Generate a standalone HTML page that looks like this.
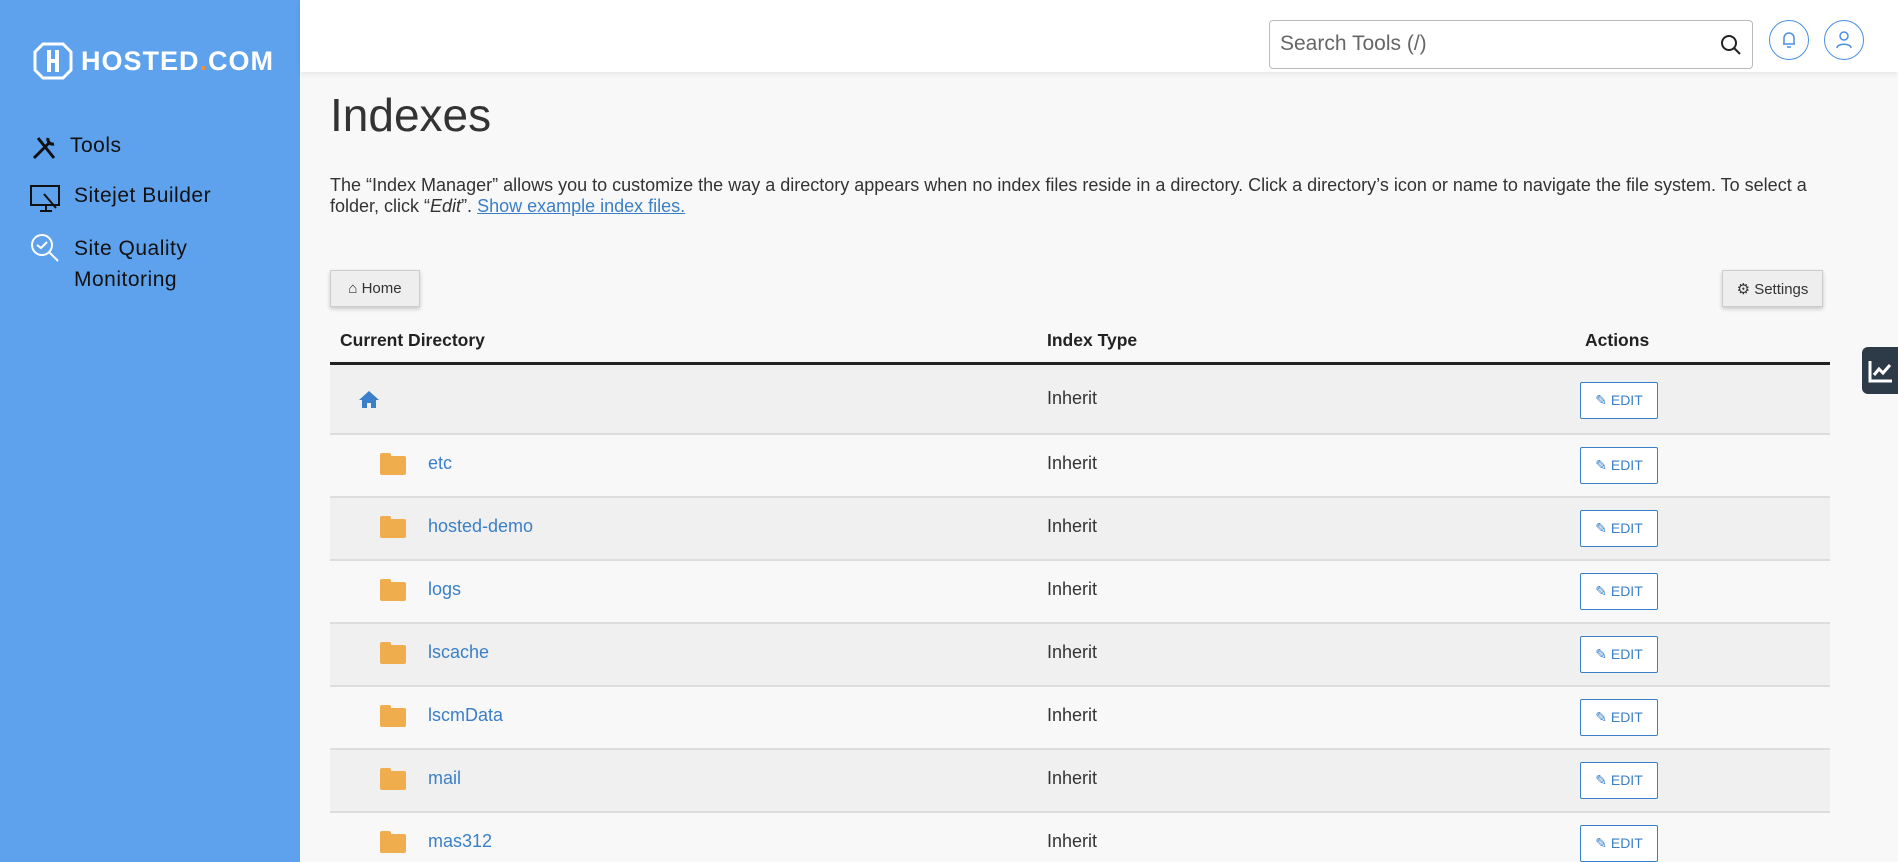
<!DOCTYPE html>
<html style="overflow:hidden;width:1898px;height:862px"><head><meta charset="utf-8"><style>
*{box-sizing:border-box;margin:0;padding:0}
body{width:1898px;height:862px;overflow:hidden;background:#f8f8f8;font-family:"Liberation Sans",sans-serif;color:#333;position:relative}
.side{position:absolute;left:0;top:0;width:300px;height:862px;background:#5ea2ee}
.logo{position:absolute;left:33px;top:42px;color:#fff;font-weight:bold;font-size:27px;letter-spacing:1px;display:flex;align-items:center}
.nav{position:absolute;left:30px;color:#111;font-size:21px;display:flex;align-items:flex-start;letter-spacing:.5px}
.nav svg{margin-right:12px}
.top{position:absolute;left:300px;top:0;right:0;height:72px;background:#fff;box-shadow:0 2px 6px rgba(0,0,0,.08)}
.search{position:absolute;left:1269px;top:20px;width:484px;height:49px;border:1px solid #bbb;border-radius:4px;background:#fff;font-size:21px;color:#666;padding:11px 10px}
.circ{position:absolute;top:20px;width:40px;height:40px;border:1px solid #4a90e2;border-radius:50%;display:flex;align-items:center;justify-content:center}
h1{position:absolute;left:330px;top:88px;font-size:46px;font-weight:normal;color:#333}
.p{position:absolute;left:330px;top:175px;width:1540px;font-size:18px;line-height:21px;color:#333;white-space:nowrap}
.p a{color:#3a7fc7;text-decoration:underline}
.btn{position:absolute;height:37px;background:#eee;border:1px solid #ccc;box-shadow:0 2px 4px rgba(0,0,0,.2);font-size:15px;display:flex;align-items:center;justify-content:center;gap:5px;color:#333}
.th{position:absolute;top:330px;font-weight:bold;font-size:17.5px;color:#222}
.line{position:absolute;left:330px;width:1500px;top:362px;height:3px;background:#222}
.wrap{position:absolute;left:0;top:0;width:1898px;height:862px;overflow:hidden}
.row{position:absolute;left:330px;width:1500px;border-bottom:2px solid #ddd}
.row .n{position:absolute;left:98px;color:#3a7fc7;font-size:18px}
.row .t{position:absolute;left:717px;font-size:18px;color:#333}
.row .f{position:absolute;left:50px;width:26px;height:19px;background:#f0ad4e;border-radius:2px}
.row .f:before{content:"";position:absolute;left:0;top:-3px;width:11px;height:5px;background:#f0ad4e;border-radius:2px 2px 0 0}
.edit{position:absolute;left:1250px;width:78px;height:37px;border:1px solid #3a7fc7;background:#fff;color:#3a7fc7;font-size:14px;display:flex;align-items:center;justify-content:center;gap:4px;border-radius:2px}
.widget{position:absolute;left:1862px;top:347px;width:36px;height:47px;background:#2d3a48;border-radius:6px 0 0 6px}
</style></head><body>
<div class="side">
 <div class="logo"><svg width="40" height="38" viewBox="0 0 40 38"><path d="M10 2h20l8 8v18l-8 8H10l-8-8V10z" fill="none" stroke="#fff" stroke-width="3"/><rect x="14" y="8" width="4" height="22" fill="#fff"/><rect x="22" y="8" width="4" height="22" fill="#fff"/><rect x="14" y="17" width="12" height="4" fill="#fff"/></svg><span style="margin-left:8px">HOSTED<span style="color:#f58a3a">.</span>COM</span></div>
 <div class="nav" style="top:134px"><svg width="28" height="28" viewBox="0 0 28 28" stroke="#111" stroke-width="3" fill="none"><path d="M4 24L20 8M8 4l16 20M18 4a5 5 0 0 0 6 6"/></svg>Tools</div>
 <div class="nav" style="top:184px"><svg width="32" height="30" viewBox="0 0 32 30" stroke="#111" stroke-width="2" fill="none"><rect x="1" y="2" width="28" height="19"/><path d="M10 27h12M16 21v6M14 10l12 14"/></svg>Sitejet Builder</div>
 <div class="nav" style="top:233px;line-height:31px"><svg width="32" height="32" viewBox="0 0 32 32" stroke="#fff" stroke-width="2" fill="none"><circle cx="12" cy="12" r="10"/><path d="M7 12l4 3 6-6M19 19l9 9"/></svg><span>Site Quality<br>Monitoring</span></div>
</div>
<div class="top"></div>
<div class="search">Search Tools (/)<svg style="position:absolute;right:10px;top:13px" width="22" height="22" viewBox="0 0 22 22" stroke="#222" stroke-width="2" fill="none"><circle cx="9" cy="9" r="7"/><path d="M14 14l6 6"/></svg></div>
<div class="circ" style="left:1769px"><svg width="16" height="18" viewBox="0 0 16 18" stroke="#4a90e2" stroke-width="1.5" fill="none"><path d="M3 13V7a5 5 0 0 1 10 0v6H2h12M6 16h4"/></svg></div>
<div class="circ" style="left:1824px"><svg width="16" height="18" viewBox="0 0 16 18" stroke="#4a90e2" stroke-width="1.5" fill="none"><circle cx="8" cy="5" r="4"/><path d="M1 17c0-5 14-5 14 0"/></svg></div>
<h1>Indexes</h1>
<div class="p">The “Index Manager” allows you to customize the way a directory appears when no index files reside in a directory. Click a directory’s icon or name to navigate the file system. To select a<br>folder, click “<i>Edit</i>”. <a>Show example index files.</a></div>
<div class="btn" style="left:330px;top:270px;width:90px">&#8962; Home</div>
<div class="btn" style="left:1722px;top:270px;width:101px">&#9881; Settings</div>
<div class="th" style="left:340px">Current Directory</div>
<div class="th" style="left:1047px">Index Type</div>
<div class="th" style="left:1585px">Actions</div>
<div class="line"></div>
<div class="wrap">
<div class="row" style="top:365px;height:70px;background:#f0f0f0"><svg style="position:absolute;left:28px;top:25px" width="22" height="18" viewBox="0 0 22 18"><path d="M11 1L1 10h3v8h5v-5h4v5h5v-8h3z" fill="#3a7fc7"/></svg><span class="t" style="top:23px">Inherit</span><div class="edit" style="top:17px">&#9998; EDIT</div></div>
<div class="row" style="top:435px;height:63px;background:#f8f8f8"><div class="f" style="top:21px"></div><span class="n" style="top:18px">etc</span><span class="t" style="top:18px">Inherit</span><div class="edit" style="top:12px">&#9998; EDIT</div></div>
<div class="row" style="top:498px;height:63px;background:#f0f0f0"><div class="f" style="top:21px"></div><span class="n" style="top:18px">hosted-demo</span><span class="t" style="top:18px">Inherit</span><div class="edit" style="top:12px">&#9998; EDIT</div></div>
<div class="row" style="top:561px;height:63px;background:#f8f8f8"><div class="f" style="top:21px"></div><span class="n" style="top:18px">logs</span><span class="t" style="top:18px">Inherit</span><div class="edit" style="top:12px">&#9998; EDIT</div></div>
<div class="row" style="top:624px;height:63px;background:#f0f0f0"><div class="f" style="top:21px"></div><span class="n" style="top:18px">lscache</span><span class="t" style="top:18px">Inherit</span><div class="edit" style="top:12px">&#9998; EDIT</div></div>
<div class="row" style="top:687px;height:63px;background:#f8f8f8"><div class="f" style="top:21px"></div><span class="n" style="top:18px">lscmData</span><span class="t" style="top:18px">Inherit</span><div class="edit" style="top:12px">&#9998; EDIT</div></div>
<div class="row" style="top:750px;height:63px;background:#f0f0f0"><div class="f" style="top:21px"></div><span class="n" style="top:18px">mail</span><span class="t" style="top:18px">Inherit</span><div class="edit" style="top:12px">&#9998; EDIT</div></div>
<div class="row" style="top:813px;height:63px;background:#f8f8f8"><div class="f" style="top:21px"></div><span class="n" style="top:18px">mas312</span><span class="t" style="top:18px">Inherit</span><div class="edit" style="top:12px">&#9998; EDIT</div></div>
</div>
<div class="widget"><svg style="position:absolute;left:6px;top:12px" width="26" height="24" viewBox="0 0 26 24" stroke="#fff" stroke-width="3" fill="none"><path d="M2 2v20h22M6 16l5-6 4 4 7-8"/></svg></div>
</body></html>
